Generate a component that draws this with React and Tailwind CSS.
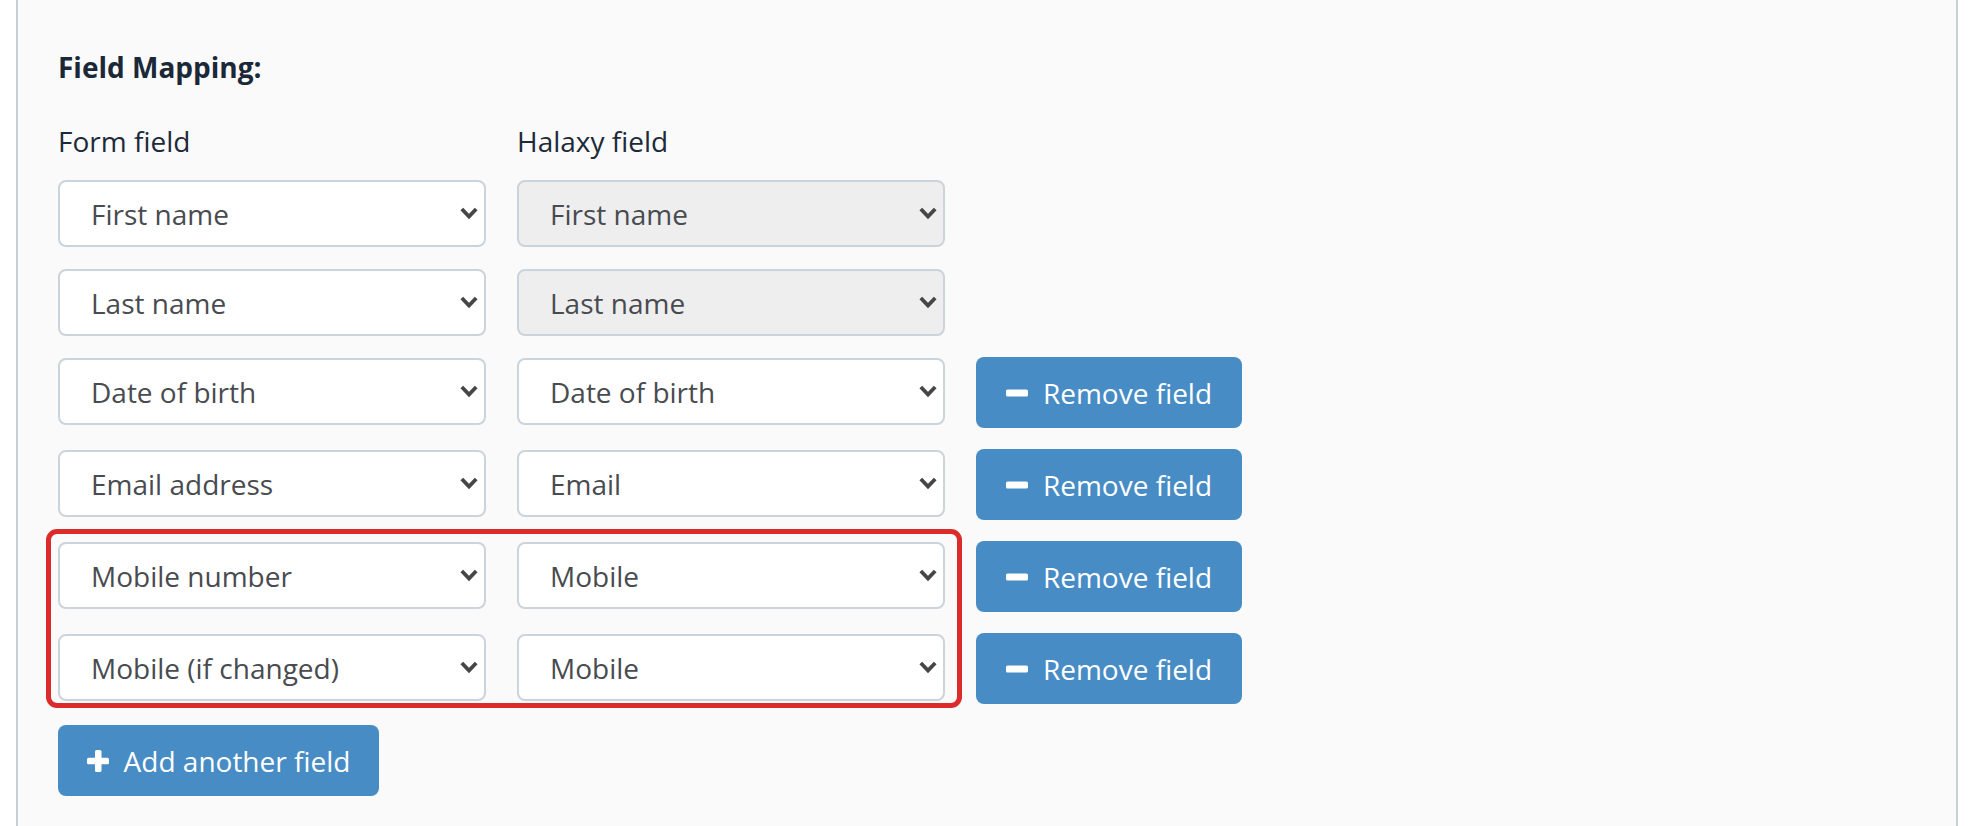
import React from "react";

function Chevron() {
  return (
    <svg width="18" height="13" viewBox="0 0 18 13" className="shrink-0">
      <polyline
        points="1.8,2 9,9.6 16.2,2"
        fill="none"
        stroke="#464646"
        strokeWidth="3.8"
        strokeLinejoin="miter"
        strokeLinecap="butt"
      />
    </svg>
  );
}

function Select({ value, disabled }) {
  return (
    <div
      className={
        "mt-px flex h-[67px] w-[428px] shrink-0 items-center justify-between rounded-[8px] border-2 border-[#cbd3db] pl-[31px] pr-[6px] text-[28px] leading-none text-[#484b50] " +
        (disabled ? "bg-[#eeeeee]" : "bg-white")
      }
    >
      <span>{value}</span>
      <Chevron />
    </div>
  );
}

function MinusIcon() {
  return (
    <svg width="22" height="8" viewBox="0 0 22 8" className="shrink-0">
      <rect x="0" y="0.5" width="22" height="7" rx="1.6" fill="white" />
    </svg>
  );
}

function PlusIcon() {
  return (
    <svg width="22" height="22" viewBox="0 0 22 22" className="shrink-0">
      <rect x="8" y="0" width="6.5" height="22" rx="1.6" fill="white" />
      <rect x="0" y="7.8" width="22" height="6.5" rx="1.6" fill="white" />
    </svg>
  );
}

function RemoveButton() {
  return (
    <button className="flex h-[71px] w-[266px] shrink-0 items-center justify-center gap-[15px] rounded-[8px] bg-[#478cc5] text-[28px] leading-none text-white">
      <MinusIcon />
      <span>Remove field</span>
    </button>
  );
}

function Row({ left, right, disabled, removable }) {
  return (
    <div className="flex items-start gap-[31px]">
      <Select value={left} />
      <Select value={right} disabled={disabled} />
      {removable && <RemoveButton />}
    </div>
  );
}

export default function App() {
  return (
    <div className="min-h-screen bg-white font-['Open_Sans',sans-serif]">
      <div className="ml-[16px] mr-[18px] min-h-[826px] border-x-2 border-[#c6cfd3] bg-[#fafafa] pl-[40px] pt-[47px]">
        <h3 className="text-[28px] font-bold leading-[40px] text-[#1b2838]">
          Field Mapping:
        </h3>
        <div className="mt-[34px] flex gap-[31px] text-[28px] leading-[40px] text-[#1e2a38]">
          <div className="w-[428px]">Form field</div>
          <div className="w-[428px]">Halaxy field</div>
        </div>
        <div className="mt-[18px] flex flex-col gap-[21px]">
          <Row left="First name" right="First name" disabled />
          <Row left="Last name" right="Last name" disabled />
          <Row left="Date of birth" right="Date of birth" removable />
          <Row left="Email address" right="Email" removable />
          <div className="relative flex flex-col gap-[21px]">
            <Row left="Mobile number" right="Mobile" removable />
            <Row left="Mobile (if changed)" right="Mobile" removable />
            <div className="pointer-events-none absolute -left-[12px] -top-[12px] h-[179px] w-[916px] rounded-[11px] border-[5px] border-[#dc2b2b]" />
          </div>
          <div>
            <button className="flex h-[71px] w-[321px] items-center justify-center gap-[15px] rounded-[8px] bg-[#478cc5] text-[28px] leading-none text-white">
              <PlusIcon />
              <span>Add another field</span>
            </button>
          </div>
        </div>
      </div>
    </div>
  );
}
